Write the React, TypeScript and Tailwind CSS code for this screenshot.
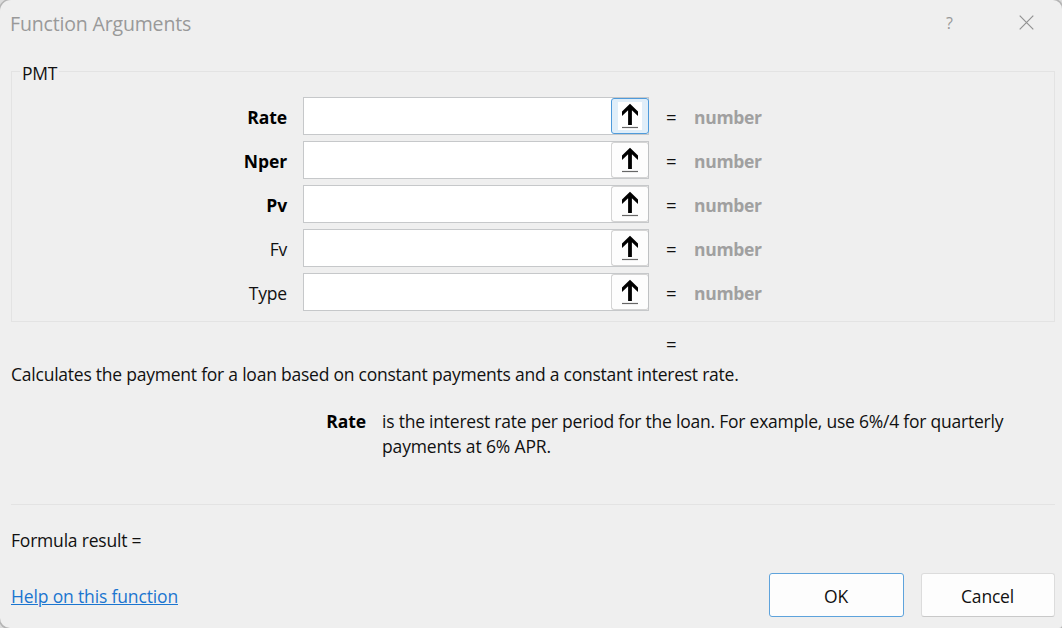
import React from "react";

type Field = { label: string; required: boolean };

const fields: Field[] = [
  { label: "Rate", required: true },
  { label: "Nper", required: true },
  { label: "Pv", required: true },
  { label: "Fv", required: false },
  { label: "Type", required: false },
];

function CollapseIcon() {
  return (
    <svg width="24" height="28" viewBox="0 0 24 28" fill="none" className="block">
      <path d="M12 1.8L20 9.4V14L13.9 8.2V23H10.1V8.2L4 14V9.4Z" fill="#000" />
      <path d="M4 25.5H20" stroke="#666" strokeWidth="1.2" />
    </svg>
  );
}

function ArgumentRow({ field, active }: { field: Field; active: boolean }) {
  return (
    <div className="flex h-[38px] items-center">
      <label
        className={
          field.required
            ? "w-[275px] shrink-0 pt-[3px] text-right font-bold tracking-[-0.1px] text-black"
            : "w-[275px] shrink-0 pt-[2px] text-right tracking-[-0.2px]"
        }
      >
        {field.label}
      </label>
      <div className="ml-[16px] flex h-[38px] w-[346px] shrink-0 border border-[#c6c8ca] bg-white">
        <input aria-label={field.label} className="min-w-0 flex-1 bg-transparent px-2 outline-none" />
        <button
          aria-label={`Select ${field.label}`}
          className={
            active
              ? "-mr-px flex h-9 w-[38px] items-center justify-center rounded-[3px] border border-[#4f9bdb] bg-[#e0eef9]"
              : "-mr-px flex h-9 w-[38px] items-center justify-center rounded-[3px] border border-[#d4d4d4] border-r-[#bfc1c3] bg-[#fdfdfd]"
          }
        >
          <span className={active ? "bg-white" : ""}>
            <CollapseIcon />
          </span>
        </button>
      </div>
      <span className="ml-[17px] w-[28px] pt-[1px] text-[18.5px]">=</span>
      <span className="pt-[3px] font-bold tracking-[-0.3px] text-[#a0a0a0]">number</span>
    </div>
  );
}

export default function App() {
  return (
    <div className="h-[628px] w-[1062px] overflow-hidden bg-[#dcdcdc] font-['Open_Sans',sans-serif] text-[17.5px] leading-[25px] text-[#111]">
      <div className="flex h-full flex-col rounded-tl-[11px] rounded-tr-[9px] rounded-br-[3px] rounded-bl-[10px] bg-[#efefef] pr-[7px] pl-[11px] shadow-[0_0_0_1.5px_#b4b4b4]">
        <header className="flex h-[58px] shrink-0 items-start justify-between text-[#999]">
          <h1 className="mt-[11px] -ml-px text-[19.5px] tracking-[-0.16px]">Function Arguments</h1>
          <div className="flex pt-[11px]">
            <button aria-label="Help" className="mr-[66px] text-[16px]">?</button>
            <button aria-label="Close" className="mr-[21px] flex h-[23px] items-center">
              <svg width="15" height="15" viewBox="0 0 15 15" stroke="#929292" strokeWidth="1.2">
                <path d="M.7 .7L14.3 14.3M14.3 .7L.7 14.3" />
              </svg>
            </button>
          </div>
        </header>

        <fieldset className="h-[264px] shrink-0 border border-[#e3e3e3]">
          <legend className="ml-[8px] h-[26px] px-[2px] pt-[3px] tracking-[-0.2px]">PMT</legend>
          <div className="flex flex-col gap-[6px] pt-[13px]">
            {fields.map((f, i) => (
              <ArgumentRow key={f.label} field={f} active={i === 0} />
            ))}
          </div>
        </fieldset>

        <div className="mt-[9px] ml-[655px] h-[25px] text-[18.5px]">=</div>
        <p className="mt-[6px] tracking-[-0.23px]">
          <span>Calculates the payment for a loan based on constant payments and a constant interest rate.</span>
        </p>
        <div className="mt-[22px] flex">
          <span className="w-[355px] shrink-0 text-right font-bold tracking-[-0.1px] text-black">Rate</span>
          <p className="ml-[16px] whitespace-nowrap">
            <span className="tracking-[-0.225px]">is the interest rate per period for the loan. For example, use 6%/4 for quarterly</span>
            <br />
            <span className="tracking-[-0.14px]">payments at 6% APR.</span>
          </p>
        </div>

        <hr className="mt-[45px] border-[#e3e3e3]" />
        <p className="mt-[23px] tracking-[-0.2px]"><span>Formula result =</span></p>
        <footer className="mt-[20px] flex items-center">
          <a href="#help" className="mt-[2px] tracking-[-0.15px] text-[#1b75d0] underline decoration-1 underline-offset-1">Help on this function</a>
          <button className="ml-auto h-[44px] w-[135px] rounded-[3px] border border-[#5ea3dc] bg-[#fdfdfd] pt-[2px] pr-px tracking-[-0.2px]">OK</button>
          <button className="ml-[17px] h-[44px] w-[134px] rounded-[3px] border border-[#dcdcdc] border-b-[#c9c9c9] bg-[#fdfdfd] pt-[2px] pr-px tracking-[-0.2px]">Cancel</button>
        </footer>
      </div>
    </div>
  );
}
